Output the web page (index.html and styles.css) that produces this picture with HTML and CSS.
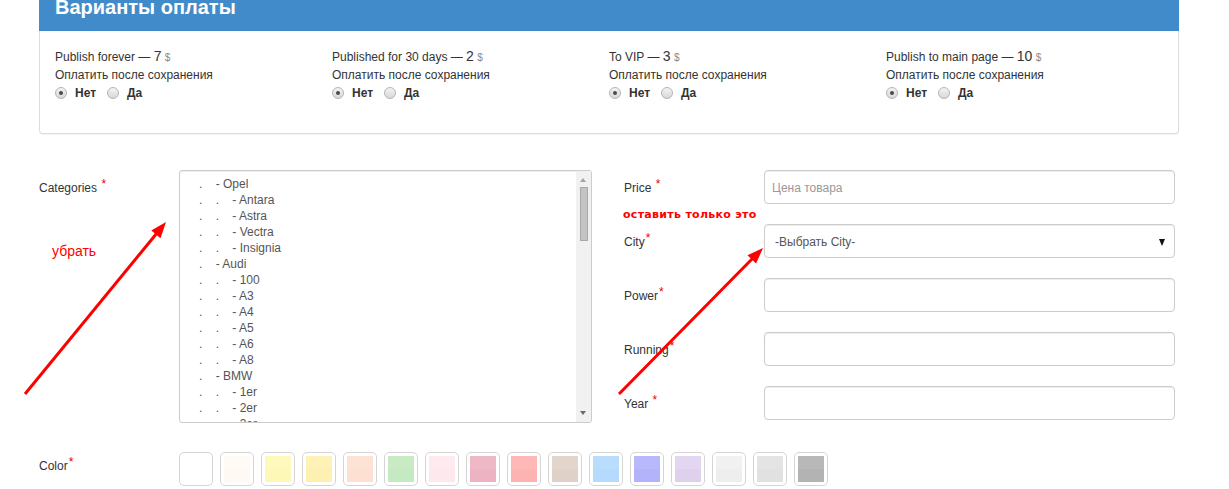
FILE: index.html
```html
<!DOCTYPE html>
<html lang="ru">
<head>
<meta charset="utf-8">
<title>Варианты оплаты</title>
<link rel="stylesheet" href="styles.css">
</head>
<body>
<section class="panel">
  <div class="panel-heading"><h2>Варианты оплаты</h2></div>
  <div class="panel-body">
    <div class="opt">
      <div class="opt-title">Publish forever — <span class="num">7</span> <span class="cur">$</span></div>
      <div class="opt-sub">Оплатить после сохранения</div>
      <div class="radios"><span class="radio checked"></span><b>Нет</b><span class="radio"></span><b>Да</b></div>
    </div>
    <div class="opt">
      <div class="opt-title">Published for 30 days — <span class="num">2</span> <span class="cur">$</span></div>
      <div class="opt-sub">Оплатить после сохранения</div>
      <div class="radios"><span class="radio checked"></span><b>Нет</b><span class="radio"></span><b>Да</b></div>
    </div>
    <div class="opt">
      <div class="opt-title">To VIP — <span class="num">3</span> <span class="cur">$</span></div>
      <div class="opt-sub">Оплатить после сохранения</div>
      <div class="radios"><span class="radio checked"></span><b>Нет</b><span class="radio"></span><b>Да</b></div>
    </div>
    <div class="opt">
      <div class="opt-title">Publish to main page — <span class="num">10</span> <span class="cur">$</span></div>
      <div class="opt-sub">Оплатить после сохранения</div>
      <div class="radios"><span class="radio checked"></span><b>Нет</b><span class="radio"></span><b>Да</b></div>
    </div>
  </div>
</section>

<div class="form">
  <div class="col-left">
    <label class="lbl lbl-top">Categories <span class="req">*</span></label>
    <div class="listbox">
      <div class="opts">
<div class="o">.    - Opel</div>
<div class="o">.    .    - Antara</div>
<div class="o">.    .    - Astra</div>
<div class="o">.    .    - Vectra</div>
<div class="o">.    .    - Insignia</div>
<div class="o">.    - Audi</div>
<div class="o">.    .    - 100</div>
<div class="o">.    .    - A3</div>
<div class="o">.    .    - A4</div>
<div class="o">.    .    - A5</div>
<div class="o">.    .    - A6</div>
<div class="o">.    .    - A8</div>
<div class="o">.    - BMW</div>
<div class="o">.    .    - 1er</div>
<div class="o">.    .    - 2er</div>
<div class="o">.    .    - 3er</div>
      </div>
      <div class="sb">
        <span class="sb-up"></span>
        <span class="sb-thumb"></span>
        <span class="sb-space"></span>
        <span class="sb-down"></span>
      </div>
    </div>
  </div>
  <div class="col-right">
    <div class="row"><label class="lbl">Price <span class="req">*</span></label><input class="inp" type="text" placeholder="Цена товара"></div>
    <div class="row"><label class="lbl">City<span class="req">*</span></label><div class="inp sel">-Выбрать City-<span class="caret"></span></div></div>
    <div class="row"><label class="lbl">Power<span class="req">*</span></label><input class="inp" type="text"></div>
    <div class="row"><label class="lbl">Running<span class="req">*</span></label><input class="inp" type="text"></div>
    <div class="row"><label class="lbl">Year <span class="req">*</span></label><input class="inp" type="text"></div>
  </div>
</div>

<div class="color-row">
  <label class="lbl lbl-color">Color<span class="req">*</span></label>
  <div class="swatches">
    <span class="sw"><i class="c0"></i></span>
    <span class="sw"><i class="c1"></i></span>
    <span class="sw"><i class="c2"></i></span>
    <span class="sw"><i class="c3"></i></span>
    <span class="sw"><i class="c4"></i></span>
    <span class="sw"><i class="c5"></i></span>
    <span class="sw"><i class="c6"></i></span>
    <span class="sw"><i class="c7"></i></span>
    <span class="sw"><i class="c8"></i></span>
    <span class="sw"><i class="c9"></i></span>
    <span class="sw"><i class="c10"></i></span>
    <span class="sw"><i class="c11"></i></span>
    <span class="sw"><i class="c12"></i></span>
    <span class="sw"><i class="c13"></i></span>
    <span class="sw"><i class="c14"></i></span>
    <span class="sw"><i class="c15"></i></span>
  </div>
</div>

<svg class="annot" width="1229" height="489" viewBox="0 0 1229 489">
  <line x1="25" y1="394" x2="157" y2="233" stroke="#ff0000" stroke-width="3"/>
  <polygon points="166,222 160.5,238.2 151.3,230.6" fill="#ff0000"/>
  <line x1="619" y1="394" x2="753" y2="258" stroke="#ff0000" stroke-width="3"/>
  <polygon points="763,248 756.1,263.6 747.5,255.2" fill="#ff0000"/>
</svg>
<div class="note note-remove">убрать</div>
<div class="note note-keep">оставить только это</div>
</body>
</html>
```

FILE: styles.css
```css
html, body {
  margin: 0;
  padding: 0;
  background: #fff;
}
body {
  position: relative;
  width: 1229px;
  height: 489px;
  overflow: hidden;
  font-family: "Liberation Sans", Arial, sans-serif;
  font-size: 12px;
  color: #333;
}

/* Panel */
.panel {
  width: 1140px;
  margin: -16px 0 0 39px;
}
.panel-heading {
  height: 47px;
  background: #428bca;
  padding: 0 16px;
  box-sizing: border-box;
}
.panel-heading h2 {
  margin: 0;
  font-size: 20px;
  line-height: 47px;
  font-weight: bold;
  color: #fff;
}
.panel-body {
  border: 1px solid #ddd;
  border-top: 0;
  border-radius: 0 0 4px 4px;
  padding: 16px 15px 31px;
  display: grid;
  grid-template-columns: repeat(4, 277px);
  box-shadow: 0 1px 1px rgba(0,0,0,.05);
}
.opt-title, .opt-sub {
  line-height: 18px;
  height: 18px;
  white-space: nowrap;
}
.opt-sub { margin-top: 1px; }
.num { font-size: 14px; }
.cur { font-size: 10px; color: #888; }
.radios {
  margin-top: 0;
  height: 18px;
  display: flex;
  align-items: center;
}
.radios b {
  font-weight: bold;
  color: #333;
}
.radio {
  width: 10px;
  height: 10px;
  border: 1px solid #b5b5b5;
  border-radius: 50%;
  background: linear-gradient(#f3f3f3, #d8d8d8);
  margin-right: 8px;
  position: relative;
}
.radios b:first-of-type { margin-right: 11px; }
.radio.checked::after {
  content: "";
  position: absolute;
  left: 3px;
  top: 3px;
  width: 4px;
  height: 4px;
  border-radius: 50%;
  background: #4a4a4a;
}

/* Form */
.form {
  display: grid;
  grid-template-columns: 553px 551px;
  column-gap: 32px;
  margin: 36px 0 0 39px;
}
.lbl {
  width: 140px;
  flex: none;
  line-height: 18px;
  color: #333;
  padding-top: 2px;
}
.req {
  color: #e00;
  position: relative;
  top: -4px;
  margin-left: 1px;
}
.col-left {
  display: flex;
  align-items: flex-start;
}
.lbl-top { padding-top: 9px; }
.listbox {
  width: 413px;
  height: 253px;
  box-sizing: border-box;
  border: 1px solid #ccc;
  border-radius: 3px;
  box-shadow: inset 0 1px 1px rgba(0,0,0,.075);
  display: flex;
  overflow: hidden;
}
.opts {
  flex: 1;
  padding: 5px 0 0 19px;
  overflow: hidden;
}
.o {
  white-space: pre;
  line-height: 16px;
  height: 16px;
  color: #555;
}
.sb {
  width: 15px;
  flex: none;
  background: #f1f1f1;
  display: flex;
  flex-direction: column;
  align-items: center;
}
.sb-up, .sb-down {
  height: 17px;
  width: 15px;
  position: relative;
  flex: none;
}
.sb-up::after, .sb-down::after {
  content: "";
  position: absolute;
  left: 4px;
  width: 0;
  height: 0;
  border-left: 3.5px solid transparent;
  border-right: 3.5px solid transparent;
}
.sb-up::after {
  top: 7px;
  border-bottom: 4px solid #a3a3a3;
}
.sb-down::after {
  top: 6px;
  border-top: 4px solid #6a6a6a;
}
.sb-thumb {
  width: 6px;
  height: 52px;
  margin-top: -1px;
  border: 1px solid #a8a8a8;
  background: #c4c4c4;
  flex: none;
}
.sb-space { flex: 1; }

.col-right {
  display: flex;
  flex-direction: column;
  gap: 20px;
}
.row {
  display: flex;
  align-items: center;
  height: 34px;
}
.inp {
  width: 411px;
  height: 34px;
  box-sizing: border-box;
  border: 1px solid #ccc;
  border-radius: 4px;
  box-shadow: inset 0 1px 1px rgba(0,0,0,.075);
  padding: 1px 7px 0;
  font-family: "Liberation Sans", Arial, sans-serif;
  font-size: 12px;
  color: #555;
  background: #fff;
  margin: 0;
  outline: none;
}
.inp::placeholder { color: #999; }
.sel {
  display: flex;
  align-items: center;
  padding-left: 10px;
  position: relative;
}
.caret {
  position: absolute;
  right: 9px;
  top: 14px;
  width: 0;
  height: 0;
  border-left: 3.5px solid transparent;
  border-right: 3.5px solid transparent;
  border-top: 7px solid #111;
}

/* Colors */
.color-row {
  display: flex;
  align-items: flex-start;
  margin: 29px 0 0 39px;
}
.lbl-color { padding-top: 5px; }
.swatches {
  display: flex;
  gap: 7px;
}
.sw {
  width: 34px;
  height: 34px;
  box-sizing: border-box;
  border: 1px solid #d5d5d5;
  border-radius: 5px;
  padding: 3px;
  background: #fff;
}
.sw i {
  display: block;
  width: 26px;
  height: 26px;
}
.c0 { background: #fff; }
.c1 { background: linear-gradient(#fefbf6 50%, #fef9f2 50%); }
.c2 { background: linear-gradient(#fef9bc 50%, #fef8b6 50%); }
.c3 { background: linear-gradient(#fef2b7 50%, #fef0b1 50%); }
.c4 { background: linear-gradient(#fde2d6 50%, #fde0d2 50%); }
.c5 { background: linear-gradient(#c8ebc6 50%, #c3eac0 50%); }
.c6 { background: linear-gradient(#feebf0 50%, #fde8ee 50%); }
.c7 { background: linear-gradient(#efb8c6 50%, #eeb3c2 50%); }
.c8 { background: linear-gradient(#feb8b8 50%, #feb3b3 50%); }
.c9 { background: linear-gradient(#e2d5cc 50%, #dfd1c7 50%); }
.c10 { background: linear-gradient(#b9defd 50%, #b4dafd 50%); }
.c11 { background: linear-gradient(#b8b8fc 50%, #b3b3fc 50%); }
.c12 { background: linear-gradient(#e3d6f0 50%, #dfd1ee 50%); }
.c13 { background: linear-gradient(#f1f1f1 50%, #eeeeee 50%); }
.c14 { background: linear-gradient(#e4e4e4 50%, #e1e1e1 50%); }
.c15 { background: linear-gradient(#b8b8b8 50%, #b3b3b3 50%); }

/* Annotations overlay */
.annot {
  position: absolute;
  left: 0;
  top: 0;
  pointer-events: none;
}
.note {
  position: absolute;
  color: #ff0000;
  white-space: nowrap;
}
.note-remove {
  left: 52px;
  top: 242px;
  font-family: "Liberation Sans", Arial, sans-serif;
  font-size: 14px;
  line-height: 18px;
}
.note-keep {
  left: 623px;
  top: 207px;
  font-family: "DejaVu Sans", Verdana, sans-serif;
  font-weight: bold;
  font-size: 11px;
  line-height: 16px;
  letter-spacing: 0.3px;
}
```
